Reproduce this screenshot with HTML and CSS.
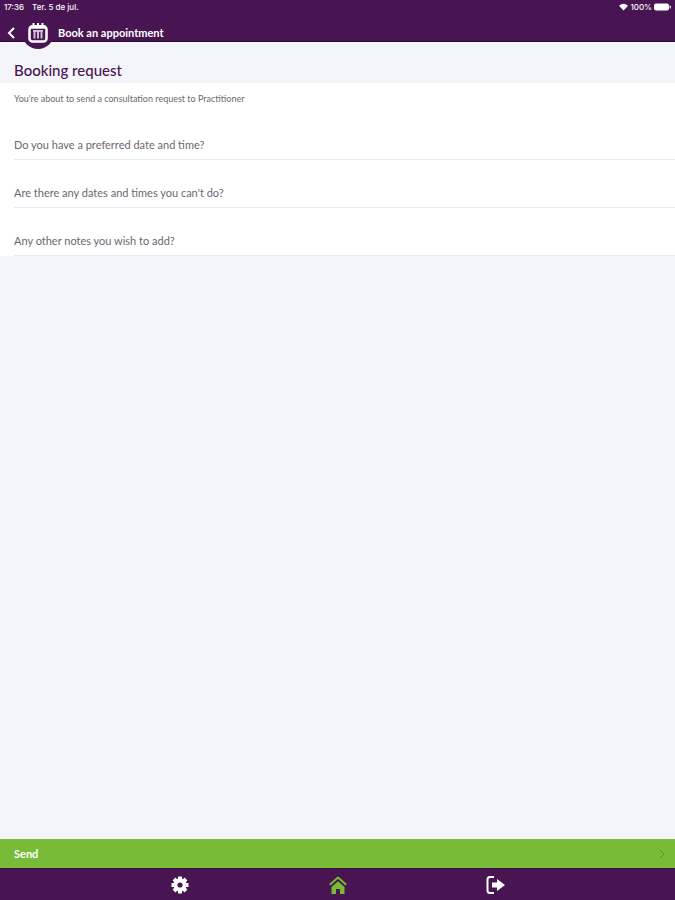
FILE: index.html
```
<!DOCTYPE html>
<html lang="en">
<head>
	<meta charset="utf-8">
	<meta name="viewport" content="width=device-width, initial-scale=1">
	<title>Book an appointment</title>
	<link rel="stylesheet" href="styles.css">
</head>

<body>

<header class="header">
	<div class="status">
		<span>17:36</span>
		<span class="status-date">Ter. 5 de jul.</span>
		<svg class="wifi" viewBox="0 0 10 8"><path d="M0 2.6Q5-1.8 10 2.6L5 8Z"/></svg>
		<span>100%</span>
		<svg class="battery" viewBox="0 0 17 8"><rect width="15" height="7" y=".5" rx="2"/><rect x="15.6" y="2.5" width="1.2" height="3" rx=".6"/></svg>
	</div>
	<div class="title-bar">
		<a href="#" class="back" aria-label="Back">
			<svg viewBox="0 0 8 12"><path d="M7 1L2 6l5 5"/></svg>
		</a>
		<span class="badge">
			<svg viewBox="0 0 20 20">
				<rect class="frame" x="1.5" y="3.2" width="17" height="15.300" rx="3"/>
				<path class="frame" d="M2 4.500h16"/>
				<path class="pins" d="M5.500 0v4M10 0v4M14.500 0v4"/>
				<path class="days" d="M5 8h10M6.500 7v8.500M10 7v8.500M13.500 7v8.500"/>
			</svg>
		</span>
		<h1>Book an appointment</h1>
	</div>
</header>

<main class="content">
	<h2>Booking request</h2>
	<form id="booking" class="form" action="#">
		<p class="intro">You're about to send a consultation request to Practitioner</p>
		<div class="field">
			<label for="preferred">Do you have a preferred date and time?</label>
			<input type="text" id="preferred" name="preferred">
		</div>
		<div class="field">
			<label for="unavailable">Are there any dates and times you can't do?</label>
			<input type="text" id="unavailable" name="unavailable">
		</div>
		<div class="field">
			<label for="notes">Any other notes you wish to add?</label>
			<input type="text" id="notes" name="notes">
		</div>
	</form>
</main>

<footer>
	<button type="submit" form="booking" class="send">
		<span>Send</span>
		<svg viewBox="0 0 6 10"><path d="M1 1l4 4-4 4"/></svg>
	</button>
	<nav class="tabs">
		<a href="#" aria-label="Settings">
			<svg viewBox="0 0 20 20">
				<path class="teeth" d="M10 1.500v17M1.500 10h17M4 4l12 12M16 4L4 16"/>
				<circle cx="10" cy="10" r="6.5" fill="currentColor"/>
				<circle class="hole" cx="10" cy="10" r="2.6"/>
			</svg>
		</a>
		<a href="#" class="active" aria-label="Home">
			<svg viewBox="0 0 20 20">
				<path class="roof" d="M1.800 9.800L10 2.500l8.200 7.300"/>
				<path fill="currentColor" d="M3.500 12L10 6.200l6.500 5.800V19H12v-5H8v5H3.500z"/>
			</svg>
		</a>
		<a href="#" aria-label="Log out">
			<svg viewBox="0 0 20 20">
				<path class="door" d="M9 2H5Q2.500 2 2.500 4.500v11Q2.500 18 5 18h4"/>
				<path fill="currentColor" d="M7 7.500h5V4l8 6-8 6v-3.500H7z"/>
			</svg>
		</a>
	</nav>
</footer>

</body>
</html>
```
FILE: styles.css
```
* {box-sizing: border-box;}
body {display: flex; flex-direction: column; min-height: 100vh; margin: 0; background: #f3f5fa; color: #6b6770; font-family: Lato, "Liberation Sans", sans-serif; font-size: 11px;}
h1, h2, p {margin: 0;}
svg {display: block; fill: none;}

/* header */
.header {background: #491452; border-bottom: 1px solid #250a30; color: #fff;}
.status {display: flex; align-items: center; height: 14px; padding: 0 4px; font-family: Inter, sans-serif; font-size: 8px; font-weight: 500;}
.status-date {margin: 0 auto 0 8px;}
.status svg {height: 8px; fill: #fff;}
.wifi {width: 9px; margin-right: 2px;}
.battery {width: 17px; margin-left: 2px;}
.title-bar {display: flex; align-items: center; height: 27px; padding: 10px 7px 0;}
.back {color: #fff;}
.back svg {width: 8px; height: 12px; stroke: currentColor; stroke-width: 2;}
.badge {display: flex; align-items: center; justify-content: center; width: 32px; height: 32px; margin: 0 4px 0 7px; border-radius: 50%; background: #491452;}
.badge svg {width: 20px; height: 20px;}
.frame {stroke: #fff; stroke-width: 2.5;}
.pins {stroke: #fff; stroke-width: 2;}
.days {stroke: #cdbfd2; stroke-width: 2;}
h1 {font-size: 11px; font-weight: 700; line-height: 16px;}

/* request form */
.content {flex: 1;}
h2 {padding: 18px 14px 3px; color: #491452; font-size: 15px; font-weight: 500; line-height: 20px;}
.form {background: #fff;}
.intro {padding: 8px 14px 6px; font-size: 9px; line-height: 15px;}
.field {display: grid; margin-left: 14px; border-bottom: 1px solid #e9eaed;}
.field label, .field input {grid-area: 1 / 1;}
.field label {padding: 25px 0 6px; line-height: 16px; pointer-events: none;}
.field input {width: 100%; padding: 24px 0 6px; border: 0; background: none; color: inherit; font: inherit; outline: 0;}
.field:focus-within label {padding-top: 4px; font-size: 9px;}

/* bottom bars */
.send {display: flex; align-items: center; justify-content: space-between; width: 100%; height: 29px; padding: 0 10px 0 14px; border: 0; background: #78bb37; color: #fff; font: 700 11px Lato, sans-serif; cursor: pointer;}
.send svg {width: 6px; height: 10px; stroke: #569422; stroke-width: 1;}
.tabs {display: grid; grid-template-columns: repeat(3, 1fr); height: 32px; padding: 0 15%; border-top: 1px solid #35103f; background: #491452;}
.tabs a {display: flex; align-items: center; justify-content: center; color: #fff;}
.tabs .active {color: #78bb37;}
.tabs svg {width: 20px; height: 20px;}
.teeth {stroke: currentColor; stroke-width: 4;}
.hole {fill: #491452;}
.roof, .door {stroke: currentColor; stroke-width: 2;}
```
